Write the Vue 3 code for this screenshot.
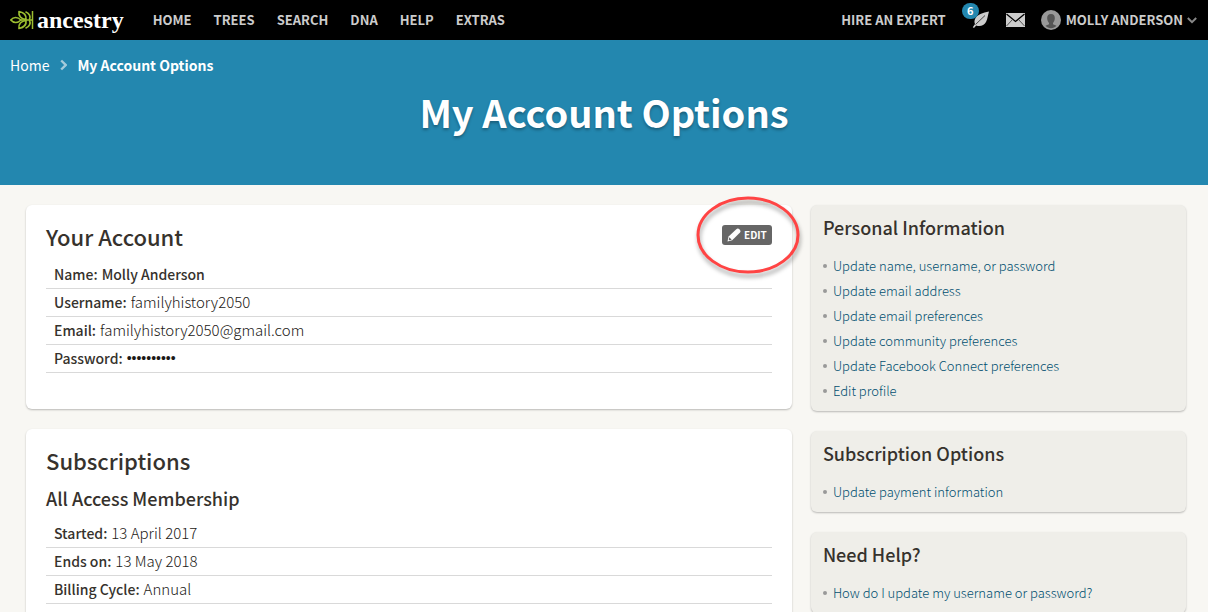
<script setup>
const navItems = ['HOME', 'TREES', 'SEARCH', 'DNA', 'HELP', 'EXTRAS']

const account = [
  { label: 'Name:', value: 'Molly Anderson', strong: true },
  { label: 'Username:', value: 'familyhistory2050' },
  { label: 'Email:', value: 'familyhistory2050@gmail.com' },
  { label: 'Password:', value: '••••••••••', dots: true },
]

const subscription = [
  { label: 'Started:', value: '13 April 2017' },
  { label: 'Ends on:', value: '13 May 2018' },
  { label: 'Billing Cycle:', value: 'Annual' },
]

const panels = [
  {
    title: 'Personal Information',
    links: [
      'Update name, username, or password',
      'Update email address',
      'Update email preferences',
      'Update community preferences',
      'Update Facebook Connect preferences',
      'Edit profile',
    ],
  },
  { title: 'Subscription Options', links: ['Update payment information'] },
  { title: 'Need Help?', links: ['How do I update my username or password?'] },
]
</script>

<template>
  <div class="page">
    <header class="topbar">
      <a class="logo" href="#" aria-label="ancestry">
        <svg class="logo-mark" viewBox="0 0 24 20" width="24" height="20" aria-hidden="true">
          <g fill="none" stroke="#9cbe30" stroke-width="1.7" stroke-linejoin="round">
            <path d="M0.8 10C3.5 6.800 7.500 6.600 11 10C7.500 13.400 3.500 13.200 0.800 10Z" />
            <path d="M9 1.500C14 2.500 16.500 5.500 16 9.500C11 9 8.300 6 9 1.500Z" />
            <path d="M9 18.500C14 17.500 16.500 14.500 16 10.500C11 11 8.300 14 9 18.500Z" />
            <path d="M15.500 1.800C19.500 3.500 21 6.500 19.500 9.500M15.500 18.200C19.500 16.500 21 13.500 19.500 10.500M10 10H22" />
          </g>
          <path d="M22.500 1V19" stroke="#9cbe30" stroke-width="1.500" />
        </svg>
        <span class="logo-text">ancestry</span>
      </a>
      <nav class="nav">
        <a v-for="item in navItems" :key="item" href="#">{{ item }}</a>
      </nav>
      <div class="tools">
        <a class="expert" href="#">HIRE AN EXPERT</a>
        <a class="hints" href="#" aria-label="Hints">
          <svg viewBox="0 0 18 18" width="18" height="18" aria-hidden="true">
            <path d="M17 0.500C11 1.500 5 3.500 3 8C2.200 10 2.400 11.700 3 13L0.800 16.200L2 17L4.200 14.400C8 16 12 14.500 14 11C15.800 7.800 15.800 4 17 0.500Z" fill="#ccc" />
            <path d="M3.500 13.500L13 4.500" stroke="#222" stroke-width="0.8" />
          </svg>
          <span class="badge">6</span>
        </a>
        <a class="mail" href="#" aria-label="Messages">
          <svg viewBox="0 0 19 14" width="19" height="14" aria-hidden="true">
            <rect width="19" height="14" fill="#ccc" />
            <path d="M0.500 1L9.500 8.500L18.500 1" fill="none" stroke="#000" stroke-width="1.300" />
            <path d="M0.500 13L6.500 6.500M18.500 13L12.500 6.500" fill="none" stroke="#333" stroke-width="0.800" />
          </svg>
        </a>
        <button class="user" type="button">
          <svg viewBox="0 0 20 20" width="20" height="20" aria-hidden="true">
            <circle cx="10" cy="10" r="10" fill="#999" />
            <path d="M10 4C7.200 4 6 6 6.200 8.600C6.300 10.500 7 12 8 12.900V14.200L4.500 15.800C7 19 13 19 15.500 15.800L12 14.200V12.900C13 12 13.700 10.500 13.800 8.600C14 6 12.800 4 10 4Z" fill="#555" />
          </svg>
          <span>MOLLY ANDERSON</span>
          <svg class="caret" viewBox="0 0 10 7" width="10" height="7" aria-hidden="true">
            <path d="M0.800 1L5 5.200L9.200 1" fill="none" stroke="#888" stroke-width="2" />
          </svg>
        </button>
      </div>
    </header>

    <section class="hero">
      <nav class="crumbs" aria-label="Breadcrumb">
        <a href="#">Home</a>
        <svg viewBox="0 0 8 12" width="8" height="12" aria-hidden="true">
          <path d="M2.200 1.500L6.700 6L2.200 10.500" fill="none" stroke="#a5cbdb" stroke-width="2.400" />
        </svg>
        <span class="current">My Account Options</span>
      </nav>
      <h1>My Account Options</h1>
    </section>

    <main class="columns">
      <div class="stack">
        <section class="card">
          <div class="card-head">
            <h2>Your Account</h2>
            <div class="edit-wrap">
              <button class="edit" type="button">
                <svg viewBox="0 0 14 14" width="14" height="14" aria-hidden="true">
                  <path d="M0.500 13.500L1.600 8.600L9.300 1.200C10.300 0.300 11.500 0.400 12.400 1.200L13 1.900C13.700 2.800 13.700 3.800 12.800 4.700L5.200 12.200Z" fill="#fff" />
                  <path d="M2.300 9.300L4.700 11.700L2 12.300L1.700 12Z" fill="#666" />
                </svg>
                <span>EDIT</span>
              </button>
              <svg class="ring" viewBox="0 0 116 92" width="116" height="92" aria-hidden="true">
                <ellipse cx="58" cy="46" rx="50" ry="37" fill="none" stroke="#f44" stroke-width="3" />
              </svg>
            </div>
          </div>
          <dl class="rows">
            <div v-for="row in account" :key="row.label" class="row">
              <dt>{{ row.label }}</dt>
              <dd :class="{ strong: row.strong, dots: row.dots }">{{ row.value }}</dd>
            </div>
          </dl>
        </section>

        <section class="card">
          <div class="card-head">
            <h2>Subscriptions</h2>
          </div>
          <h3>All Access Membership</h3>
          <dl class="rows">
            <div v-for="row in subscription" :key="row.label" class="row">
              <dt>{{ row.label }}</dt>
              <dd>{{ row.value }}</dd>
            </div>
          </dl>
        </section>
      </div>

      <aside class="stack">
        <section v-for="panel in panels" :key="panel.title" class="panel">
          <h3>{{ panel.title }}</h3>
          <ul>
            <li v-for="link in panel.links" :key="link"><a href="#">{{ link }}</a></li>
          </ul>
        </section>
      </aside>
    </main>
  </div>
</template>

<style>
body {
  margin: 0;
  background: #f8f7f3;
}
</style>

<style scoped>
.page {
  min-height: 100vh;
  background: #f8f7f3;
  color: #36322d;
  font-family: "Noto Sans CJK SC", "Open Sans", sans-serif;
  font-size: 14px;
  line-height: 20px;
}
a {
  color: inherit;
  text-decoration: none;
}
h1,
h2,
h3,
dl,
dd,
ul {
  margin: 0;
  padding: 0;
}
button {
  border: 0;
  padding: 0;
  font: inherit;
  color: inherit;
  cursor: pointer;
}
svg {
  display: block;
  flex: none;
}
.topbar {
  display: flex;
  align-items: center;
  height: 40px;
  padding: 0 11px 0 10px;
  background: #000;
  color: #ccc;
  font-size: 13px;
  font-weight: 700;
}
.logo {
  display: flex;
  align-items: center;
  gap: 3px;
  color: #fff;
}
.logo-text {
  font: bold 24px/36px "Liberation Serif", serif;
}
.nav {
  display: flex;
  gap: 22px;
  margin-left: 29px;
}
.tools {
  display: flex;
  align-items: center;
  margin-left: auto;
}
.hints {
  position: relative;
  margin-left: 26px;
}
.badge {
  position: absolute;
  left: -10px;
  top: -8px;
  width: 17px;
  height: 16px;
  border-radius: 8px;
  background: #2387af;
  color: #fff;
  font-size: 11px;
  line-height: 15px;
  text-align: center;
}
.mail {
  margin-left: 16px;
}
.user {
  display: flex;
  align-items: center;
  margin-left: 16px;
  background: none;
}
.user span {
  margin: 0 4px 0 5px;
}
.hero {
  height: 145px;
  background: #2387af;
  color: #fff;
}
.crumbs {
  display: flex;
  align-items: center;
  gap: 10px;
  padding: 15px 10px 0;
}
.current {
  font-weight: 700;
}
h1 {
  margin-top: 9px;
  font-size: 38px;
  font-weight: 700;
  line-height: 56px;
  text-align: center;
  text-shadow: 0 2px 3px rgba(0, 0, 0, 0.3);
}
.columns {
  display: grid;
  grid-template-columns: 49fr 24fr;
  gap: 19px;
  align-items: start;
  padding: 20px 22px 20px 26px;
}
.stack {
  display: grid;
  gap: 20px;
}
.card,
.panel {
  border-radius: 6px;
  box-shadow: 0 1px 2px rgba(0, 0, 0, 0.25);
}
.card {
  padding: 20px 20px 36px;
  background: #fff;
}
.card-head {
  display: flex;
  justify-content: space-between;
  align-items: flex-start;
}
h2 {
  font-size: 22px;
  font-weight: 500;
  line-height: 22px;
}
h3 {
  font-size: 18px;
  font-weight: 500;
  line-height: 22px;
}
.card h3 {
  margin-top: 16px;
}
.rows {
  margin-top: 14px;
}
.card h3 + .rows {
  margin-top: 11px;
}
.row {
  display: flex;
  align-items: center;
  gap: 4px;
  padding: 3px 8px 4px;
  border-bottom: 1px solid #d9d9d9;
}
dt,
dd.strong {
  font-size: 14px;
  font-weight: 500;
}
dd {
  color: #1c1916;
  font-size: 15px;
  font-weight: 300;
}
dd.strong {
  color: inherit;
}
dd.dots {
  font-family: "Liberation Sans", sans-serif;
  font-size: 14px;
}
.edit-wrap {
  position: relative;
  height: 20px;
}
.edit {
  display: flex;
  align-items: center;
  gap: 3px;
  height: 20px;
  padding: 0 5px;
  border-radius: 3px;
  background: #666;
  color: #fff;
  font-size: 10px;
  font-weight: 700;
}
.ring {
  position: absolute;
  left: -32px;
  top: -36px;
  pointer-events: none;
  filter: drop-shadow(1px 4px 2px rgba(0, 0, 0, 0.35));
}
.panel {
  padding: 11px 12px 8px;
  background: #efeee9;
}
.panel h3 {
  margin-bottom: 15px;
}
ul {
  list-style: none;
}
li {
  display: flex;
  align-items: center;
  gap: 6px;
  color: #004f70;
  font-size: 13px;
  font-weight: 300;
  line-height: 25px;
}
li::before {
  content: "";
  width: 4px;
  height: 4px;
  border-radius: 2px;
  background: #999;
}
</style>
